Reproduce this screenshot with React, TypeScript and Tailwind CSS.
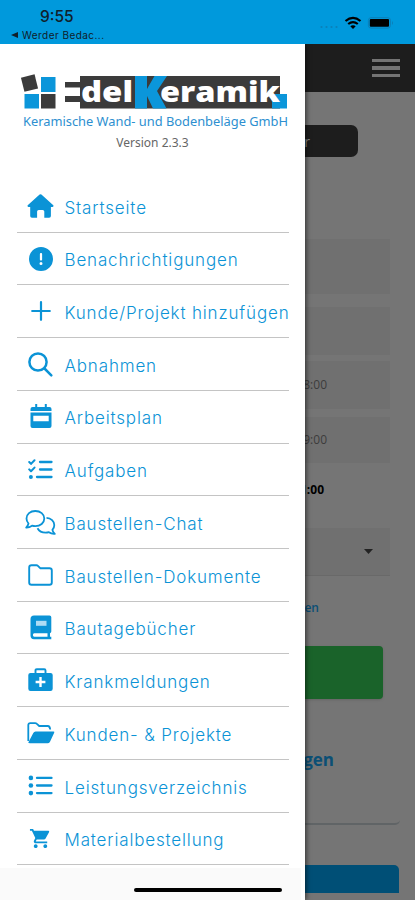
import { FaCircleExclamation } from 'react-icons/fa6';
import { MdShoppingCart } from 'react-icons/md';
import type { ReactNode } from 'react';

interface MenuItem {
  label: string;
  icon: ReactNode;
}

function HouseIcon() {
  return (
    <svg width="27" height="24" viewBox="0 0 27 24" fill="currentColor">
      <path d="M12.6.5Q13.500-.2 14.400.5L26.300 11.200Q27 12.600 25.600 12.900H23.900V22Q23.900 23.800 22.100 23.800H17.300V17.500Q17.300 15.900 15.700 15.900H11.700Q10.100 15.900 10.100 17.500V23.800H5Q3.200 23.800 3.200 22V12.900H1.400Q0 12.600.7 11.200Z" />
    </svg>
  );
}

function PlusIcon() {
  return (
    <svg width="20" height="20" viewBox="0 0 20 20" fill="none" stroke="currentColor" strokeWidth="2.200" strokeLinecap="round">
      <path d="M10 1.200V18.800M1.200 10H18.800" />
    </svg>
  );
}

function SearchIcon() {
  return (
    <svg width="25" height="25" viewBox="0 0 25 25" fill="none" stroke="currentColor" strokeWidth="2.500" strokeLinecap="round">
      <circle cx="10" cy="10" r="8.600" />
      <path d="M16.500 16.500L23.300 23.300" />
    </svg>
  );
}

function CalendarIcon() {
  return (
    <svg width="22" height="25" viewBox="0 0 22 25" fill="currentColor">
      <path d="M5.200 0H7.200V3H14.800V0H16.800V3H19.500Q21.500 3 21.500 5V6.900H.5V5Q.5 3 2.500 3H5.200Z" />
      <path fillRule="evenodd" d="M.5 8.500H21.500V22Q21.500 24 19.500 24H2.500Q.5 24 .5 22ZM3.300 11.800V17.200H18.700V11.800Z" />
    </svg>
  );
}

function TasksIcon() {
  return (
    <svg width="25" height="21" viewBox="0 0 25 21" fill="none" stroke="currentColor" strokeWidth="2" strokeLinecap="round" strokeLinejoin="round">
      <path d="M1.200 3L3 4.900L6.500 1.200M1.200 10.400L3 12.300L6.500 8.600" />
      <path d="M12 3H23.500M12 10.500H23.500M9 18H23.500" strokeWidth="2.300" />
      <circle cx="2.900" cy="18" r="2" fill="currentColor" stroke="none" />
    </svg>
  );
}

function ChatIcon() {
  return (
    <svg width="31" height="25" viewBox="0 0 31 25" fill="none" stroke="currentColor" strokeWidth="1.800" strokeLinejoin="round">
      <path d="M10.300 1C5.200 1 1.500 4.300 1.500 8.500C1.500 10.500 2.300 12.200 3.500 13.500C3.200 15.200 2.200 16.400 1.200 17.500C3.500 17.600 5.600 16.700 7 15.700C8 16 9.100 16.200 10.300 16.200C15.400 16.200 19.300 12.900 19.300 8.600C19.300 4.300 15.400 1 10.300 1Z" />
      <path d="M21.500 7.800C26 8 29.300 11.200 29.300 15C29.300 17 28.600 18.600 27.400 19.900C27.700 21.600 28.700 22.800 29.800 23.800C27.400 24 25.300 23.200 23.900 22.200C22.900 22.500 21.800 22.700 20.700 22.700C17 22.700 13.900 20.900 12.500 18.300" />
    </svg>
  );
}

function FolderIcon() {
  return (
    <svg width="25" height="22" viewBox="0 0 25 22" fill="none" stroke="currentColor" strokeWidth="1.900" strokeLinejoin="round">
      <path d="M3.500 1.200H8.500Q9.300 1.200 9.900 1.800L12.200 4.200H21.500Q23.800 4.200 23.800 6.500V18.500Q23.800 20.800 21.500 20.800H3.500Q1.200 20.800 1.200 18.500V3.500Q1.200 1.200 3.500 1.200Z" />
    </svg>
  );
}

function BookIcon() {
  return (
    <svg width="22" height="25" viewBox="0 0 22 25" fill="currentColor">
      <path fillRule="evenodd" d="M4 .5H19.500Q21.300.5 21.300 2.300V16.500Q21.300 17.700 20 18.200V21.800H21.300V24.300H4Q.5 24 .5 20.500V4Q.5.500 4 .5ZM4.300 18.300Q2.900 18.500 2.900 20Q2.900 21.600 4.300 21.800H17.500V18.300Z" />
      <path d="M6 5.800H16.500V10.800H6Z" fill="#aedcf4" />
    </svg>
  );
}

function MedicalIcon() {
  return (
    <svg width="25" height="24" viewBox="0 0 25 24" fill="currentColor">
      <path d="M7.500 5V2.500Q7.500 1.200 8.800 1.200H16.200Q17.500 1.200 17.500 2.500V5" fill="none" stroke="currentColor" strokeWidth="1.900" />
      <path fillRule="evenodd" d="M2.500 4.900H22.500Q24.700 4.900 24.700 7V20.800Q24.700 23 22.500 23H2.500Q.3 23 .3 20.800V7Q.3 4.900 2.500 4.900ZM11.300 9V12.700H7.600V15.200H11.300V18.900H13.700V15.200H17.400V12.700H13.700V9Z" />
    </svg>
  );
}

function FolderOpenIcon() {
  return (
    <svg width="28" height="22" viewBox="0 0 28 22">
      <path d="M1.300 19V3Q1.300 1.100 3.200 1.100H8.200Q9 1.100 9.600 1.700L12.200 4H20.800Q22.900 4 23.200 7.500" fill="none" stroke="currentColor" strokeWidth="1.800" />
      <path d="M1.300 20.500L6.300 11Q7 9.400 8.600 9.400H26.400Q27.800 9.400 27.200 10.800L23 19.700Q22.200 21.300 20.600 21.300H3Q1.200 21.300 1.300 20.500Z" fill="currentColor" />
    </svg>
  );
}

function ListIcon() {
  return (
    <svg width="25" height="21" viewBox="0 0 25 21" fill="currentColor">
      <circle cx="2.900" cy="2.900" r="2.300" />
      <circle cx="2.900" cy="10.500" r="2.300" />
      <circle cx="2.900" cy="18.100" r="2.300" />
      <path d="M9 2.900H23.500M9 10.500H23.500M9 18.100H23.500" stroke="currentColor" strokeWidth="2.300" strokeLinecap="round" />
    </svg>
  );
}

const items: MenuItem[] = [
  { label: 'Startseite', icon: <HouseIcon /> },
  { label: 'Benachrichtigungen', icon: <FaCircleExclamation size={24} /> },
  { label: 'Kunde/Projekt hinzufügen', icon: <PlusIcon /> },
  { label: 'Abnahmen', icon: <SearchIcon /> },
  { label: 'Arbeitsplan', icon: <CalendarIcon /> },
  { label: 'Aufgaben', icon: <TasksIcon /> },
  { label: 'Baustellen-Chat', icon: <ChatIcon /> },
  { label: 'Baustellen-Dokumente', icon: <FolderIcon /> },
  { label: 'Bautagebücher', icon: <BookIcon /> },
  { label: 'Krankmeldungen', icon: <MedicalIcon /> },
  { label: 'Kunden- & Projekte', icon: <FolderOpenIcon /> },
  { label: 'Leistungsverzeichnis', icon: <ListIcon /> },
  { label: 'Materialbestellung', icon: <MdShoppingCart size={23} /> },
];

function StatusBar() {
  return (
    <header className="relative z-10 flex h-[44px] shrink-0 justify-between bg-[#0099dc] text-[#10202a]">
      <div className="pl-[11px] pt-[7px]">
        <div className="pl-[29px] font-['Inter',sans-serif] text-[15.500px] leading-[19px] font-medium">9:55</div>
        <div className="mt-[2px] flex items-center gap-[4px] font-['Inter',sans-serif] text-[10px] leading-[14px] tracking-[0.45px]">
          <svg width="7" height="6" viewBox="0 0 7 6"><path d="M7 0V6L0 3Z" fill="currentColor" /></svg>
          Werder Bedac...
        </div>
      </div>
      <div className="flex h-[46px] items-center pr-[21px] text-black">
        <svg width="80" height="14" viewBox="0 0 80 14">
          <g fill="#0b7fb8">
            <circle cx="7.5" cy="11" r="1.1" />
            <circle cx="12.5" cy="11" r="1.1" />
            <circle cx="17.5" cy="11" r="1.1" />
            <circle cx="22.5" cy="11" r="1.1" />
          </g>
          <g fill="none" stroke="black" strokeWidth="2.2">
            <path d="M31.5 5Q39 -1.2 46.5 5" />
            <path d="M34.2 8Q39 4.2 43.8 8" />
          </g>
          <path d="M36.3 10.3Q39 8.2 41.7 10.3L39 13Z" />
          <rect x="54.400" y="1.700" width="22" height="10.400" rx="2.6" fill="none" stroke="#0b7fb8" />
          <rect x="55.800" y="3" width="19.200" height="7.800" rx="1" />
          <path d="M78 5Q80 7 78 9Z" fill="#0b7fb8" />
        </svg>
      </div>
    </header>
  );
}

function Logo() {
  return (
    <svg className="block" width="280" height="60" viewBox="20 72 280 60">
      <rect x="22.500" y="75.800" width="14" height="14.500" fill="#3b3b3b" transform="rotate(-14 29.500 83)" />
      <rect x="41" y="77" width="14.500" height="15" fill="#0b96da" />
      <rect x="24.500" y="94" width="14.500" height="14.500" fill="#0b96da" />
      <rect x="41" y="94" width="14.500" height="14.500" fill="#3b3b3b" />
      <rect x="80" y="76" width="200" height="32.500" fill="#3b3b3b" />
      <path d="M65 82H82V87.500H65ZM65 96H82V102H65Z" fill="#3b3b3b" />
      <path d="M135 76H147V89L154.500 76H167L157 91L166.500 108.500H153L147 96V108.500H135Z" fill="#0b96da" />
      <path d="M272 94H287V108.500H272Z" fill="#0b96da" />
      <g fill="white" fontFamily="Open Sans, sans-serif" fontWeight="800" fontSize="29">
        <text x="81" y="101.500" textLength="52" lengthAdjust="spacingAndGlyphs">del</text>
        <text x="160" y="101.500" textLength="120" lengthAdjust="spacingAndGlyphs">eramik</text>
      </g>
      <text x="23" y="126" fill="#2d8fd0" fontFamily="Noto Sans, sans-serif" fontSize="12.500" textLength="265" lengthAdjust="spacingAndGlyphs">Keramische Wand- und Bodenbeläge GmbH</text>
    </svg>
  );
}

function Drawer() {
  return (
    <aside className="absolute left-0 top-[44px] flex h-[856px] w-[305px] flex-col bg-white shadow-[1px_0_5px_rgba(0,0,0,0.6)]">
      <div className="pl-[20px] pt-[28px]"><Logo /></div>
      <div className="mt-[3px] text-center font-['Noto_Sans',sans-serif] text-[12px] leading-[16px] text-[#666]">Version 2.3.3</div>
      <nav className="ml-[17px] mr-[16px] mt-[29px]">
        {items.map((item) => (
          <a key={item.label} className="flex h-[52.72px] items-center border-b-[1.500px] border-[#c4c4c4] text-[#0b93d6]">
            <span className="flex w-[47px] shrink-0 justify-center">{item.icon}</span>
            <span className="whitespace-nowrap pt-[5px] pl-[0.500px] font-['Inter',sans-serif] text-[17px] font-light tracking-[0.84px]">{item.label}</span>
          </a>
        ))}
      </nav>
      <div className="mr-[4px] mt-auto flex h-[32px] bg-[#fafafa]" />
    </aside>
  );
}

function Page() {
  return (
    <main className="flex h-[856px] flex-col bg-[#757575] font-['Open_Sans',sans-serif]">
      <div className="flex h-[48px] items-center justify-end bg-[#1d1d1d] pr-[15px]">
        <div className="flex w-[28px] flex-col gap-[4px]">
          <span className="h-[3.500px] bg-[#747474]" />
          <span className="h-[3.500px] bg-[#747474]" />
          <span className="h-[3.500px] bg-[#747474]" />
        </div>
      </div>
      <div className="mr-[57px] mt-[33px] flex h-[32px] items-center justify-end rounded-[7px] bg-[#1d1d1d] pr-[48px] text-[14px] text-[#888]">Mitarbeiter</div>
      <section className="mr-[15px] mt-[64px] h-[604px] rounded-[5px] border-b-2 border-[#606466]">
        <div className="mr-[10px] mt-[18px] h-[55px] bg-[#707070]" />
        <div className="mr-[10px] mt-[13px] h-[48px] bg-[#707070]" />
        <div className="mr-[10px] mt-[6px] flex h-[48px] items-center justify-end bg-[#707070] pr-[63px] text-[12px] text-[#3c3c3c]">08:00</div>
        <div className="mr-[10px] mt-[8px] flex h-[46px] items-center justify-end bg-[#707070] pr-[63px] text-[12px] text-[#3c3c3c]">09:00</div>
        <div className="mt-[18px] pr-[76px] text-right text-[12px] leading-[18px] font-bold text-black">01:00</div>
        <div className="mr-[10px] mt-[29px] flex h-[48px] items-center justify-end border-b border-[#696969] bg-[#707070] pr-[17px]">
          <svg width="9" height="5" viewBox="0 0 9 5"><path d="M0 0H9L4.500 5Z" fill="#222" /></svg>
        </div>
        <div className="mt-[23px] pr-[81px] text-right text-[12px] leading-[18px] font-semibold text-[#0b4f75]">Hinzufügen</div>
        <div className="mr-[17px] mt-[29px] h-[53px] rounded-[4px] bg-[#1a632a] shadow-sm" />
        <div className="mt-[49px] pr-[66px] text-right text-[17px] leading-[24px] font-bold text-[#0b4f75]">Buchungen</div>
      </section>
      <div className="mr-[16px] mt-[40px] h-[28px] rounded-t-[5px] bg-[#004f76]" />
    </main>
  );
}

export default function App() {
  return (
    <div className="relative h-[900px] w-[415px] overflow-hidden">
      <StatusBar />
      <Page />
      <Drawer />
      <div className="absolute left-[134px] top-[888px] h-[4px] w-[148px] rounded-full bg-black" />
    </div>
  );
}
